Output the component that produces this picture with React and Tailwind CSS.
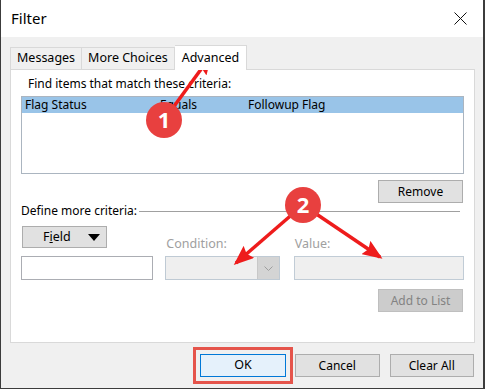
import React from 'react';

const font = { fontFamily: '"Segoe UI", "Noto Sans", "Open Sans", sans-serif' };

function Btn({ children, className = '', disabled }) {
    return (
        <div
            className={`h-[23px] w-[85px] flex items-center justify-center border text-[12px] ${disabled
                ? 'bg-[#cccccc] border-[#bfbfbf] text-[#838383]'
                : 'bg-[#e1e1e1] border-[#adadad] text-black'
                } ${className}`}
        >
            {children}
        </div>
    );
}

function Annotations() {
    return (
        <svg className="absolute inset-0 pointer-events-none" width="485" height="389" viewBox="0 0 485 389">
            <defs>
                <marker id="head" markerWidth="20" markerHeight="16" refX="17" refY="8" orient="auto" markerUnits="userSpaceOnUse">
                    <path d="M0 0 L20 8 L0 16 L3 8 Z" fill="#ee1c1c" />
                </marker>
            </defs>
            <line x1="163" y1="120" x2="209" y2="57" stroke="#ee1c1c" strokeWidth="3.5" markerEnd="url(#head)" />
            <line x1="302" y1="205" x2="235" y2="263" stroke="#ee1c1c" strokeWidth="3.5" markerEnd="url(#head)" />
            <line x1="302" y1="205" x2="379" y2="257" stroke="#ee1c1c" strokeWidth="3.5" markerEnd="url(#head)" />
            <circle cx="163" cy="120" r="18" fill="#e8403f" />
            <circle cx="302" cy="205" r="18" fill="#e8403f" />
            <text x="163" y="128" textAnchor="middle" fill="#fff" fontSize="22" fontWeight="700" fontFamily="Noto Sans, sans-serif">1</text>
            <text x="302" y="213" textAnchor="middle" fill="#fff" fontSize="22" fontWeight="700" fontFamily="Noto Sans, sans-serif">2</text>
        </svg>
    );
}

export default function App() {
    return (
        <div className="relative w-[485px] h-[389px] flex flex-col bg-[#f0f0f0] border-l border-r-2 border-b border-[#3c3c3c] overflow-hidden" style={font}>
            {/* Title bar */}
            <div className="h-[37px] bg-white flex items-center justify-between pl-[10px] pr-[16px] shrink-0">
                <span className="text-[15px] text-black">Filter</span>
                <svg width="13" height="13" viewBox="0 0 13 13">
                    <path d="M0.5 0.5 L12.5 12.5 M12.5 0.5 L0.5 12.5" stroke="#111" strokeWidth="1" />
                </svg>
            </div>

            <div className="flex-1 flex flex-col px-[9px] pt-[8px]">
                {/* Tabs */}
                <div className="flex items-end h-[24px] relative z-10">
                    <div className="h-[22px] px-[6px] flex items-center border border-b-0 border-[#d9d9d9] bg-[#f0f0f0] text-[12.5px]">Messages</div>
                    <div className="h-[22px] px-[6px] flex items-center border border-l-0 border-b-0 border-[#d9d9d9] bg-[#f0f0f0] text-[12.5px]">More Choices</div>
                    <div className="h-[25px] -mb-px px-[7px] flex items-center border border-l-0 border-b-0 border-[#d9d9d9] bg-white text-[12.5px]">Advanced</div>
                </div>

                {/* Tab panel */}
                <div className="w-[465px] h-[274px] bg-white border border-[#d9d9d9] flex flex-col pl-[10px] pr-[10px]">
                    <div className="pt-[6px] pl-[7px] text-[12px] leading-[16px]">Find items that match these criteria:</div>
                    <div className="mt-[4px] h-[78px] border border-[#abb5c0] bg-white">
                        <div className="h-[16px] bg-[#99c4e8] flex items-center text-[12px] relative">
                            <span className="absolute left-[3px]">Flag Status</span>
                            <span className="absolute left-[138px]">Equals</span>
                            <span className="absolute left-[226px]">Followup Flag</span>
                        </div>
                    </div>
                    <div className="mt-[6px] flex justify-end">
                        <Btn className="mr-[1px]">Remove</Btn>
                    </div>
                    <div className="flex items-center h-[16px] text-[12px] mt-0">
                        <span>Define more criteria:</span>
                        <div className="flex-1 h-px bg-[#a0a0a0] ml-[2px] mr-[4px]" />
                    </div>
                    <div className="mt-[7px] flex items-end">
                        <div className="flex flex-col w-[133px]">
                            <div className="ml-[1px] w-[85px] h-[22px] bg-[#e1e1e1] border border-[#adadad] flex items-center text-[12.5px]">
                                <span className="ml-[20px]">F<span className="underline">i</span>eld</span>
                                <svg className="ml-[17px]" width="12" height="7" viewBox="0 0 12 7">
                                    <path d="M0 0 L12 0 L6 7 Z" fill="#000" />
                                </svg>
                            </div>
                            <div className="mt-[8px] h-[24px] border border-[#abadb3] bg-white" />
                        </div>
                        <div className="flex flex-col ml-[12px] w-[115px]">
                            <span className="text-[12.5px] leading-[16px] text-[#a0a0a0] ml-[1px]">Condition:</span>
                            <div className="mt-[4px] h-[24px] border border-[#bfcad4] bg-[#efefef] flex justify-end">
                                <div className="w-[22px] h-full bg-[#d4d4d4] border-l border-[#c8c8c8] flex items-center justify-center">
                                    <svg width="9" height="5" viewBox="0 0 9 5">
                                        <path d="M0.5 0.5 L4.5 4.5 L8.5 0.5" fill="none" stroke="#9e9e9e" strokeWidth="1" />
                                    </svg>
                                </div>
                            </div>
                        </div>
                        <div className="flex flex-col ml-[14px] w-[171px]">
                            <span className="text-[12.5px] leading-[16px] text-[#a0a0a0] ml-[1px]">Value:</span>
                            <div className="mt-[4px] h-[24px] border border-[#c1ccd6] bg-[#efefef]" />
                        </div>
                    </div>
                    <div className="mt-[9px] flex justify-end">
                        <Btn disabled className="mr-[1px] text-[12.5px]">Add to List</Btn>
                    </div>
                </div>

                {/* Footer buttons */}
                <div className="mt-[11px] flex">
                    <div className="relative ml-[190px]">
                        <div className="absolute -inset-[7px] border-[3px] border-[#e5544b]" />
                        <div className="h-[23px] w-[86px] flex items-center justify-center border border-[#0078d7] bg-[#e5f1fb] text-[12.5px]">OK</div>
                    </div>
                    <Btn className="ml-[9px] text-[12.5px]">Cancel</Btn>
                    <Btn className="ml-[10px] text-[12.5px]">Clear All</Btn>
                </div>
            </div>

            <Annotations />
        </div>
    );
}
